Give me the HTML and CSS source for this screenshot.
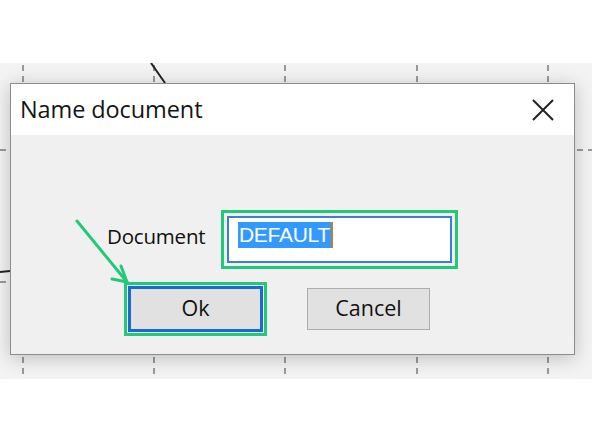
FILE: index.html
```html
<!DOCTYPE html>
<html>
<head>
<meta charset="utf-8">
<link rel="stylesheet" href="styles.css">
</head>
<body>
<div class="page">
  <div class="canvas">
    <svg class="grid" width="592" height="316" viewBox="0 0 592 316">
      <g stroke="#9a9a9a" stroke-width="2" stroke-dasharray="6 5">
        <line x1="23" y1="2" x2="23" y2="20"/>
        <line x1="154" y1="2" x2="154" y2="20"/>
        <line x1="285" y1="2" x2="285" y2="20"/>
        <line x1="417" y1="2" x2="417" y2="20"/>
        <line x1="548" y1="2" x2="548" y2="20"/>
        <line x1="23" y1="294" x2="23" y2="316"/>
        <line x1="154" y1="294" x2="154" y2="316"/>
        <line x1="285" y1="294" x2="285" y2="316"/>
        <line x1="417" y1="294" x2="417" y2="316"/>
        <line x1="548" y1="294" x2="548" y2="316"/>
        <line x1="0" y1="87" x2="10" y2="87"/>
        <line x1="577" y1="87" x2="592" y2="87"/>
        <line x1="0" y1="219" x2="10" y2="219"/>
      </g>
      <line x1="151" y1="0" x2="165" y2="20" stroke="#222" stroke-width="2"/>
      <line x1="0" y1="209" x2="10" y2="208" stroke="#222" stroke-width="2"/>
    </svg>
    <div class="dialog">
      <div class="titlebar">
        <span class="title">Name document</span>
        <svg class="close" width="22" height="22" viewBox="0 0 22 22">
          <path d="M1 1 L21 21 M21 1 L1 21" stroke="#222" stroke-width="2" fill="none"/>
        </svg>
      </div>
      <div class="content">
        <div class="row">
          <span class="label">Document</span>
          <div class="input"><span class="sel">DEFAULT</span><span class="caret"></span></div>
        </div>
        <div class="row buttons">
          <button class="btn ok">Ok</button>
          <button class="btn cancel">Cancel</button>
        </div>
      </div>
    </div>
  </div>
  <svg class="arrow" width="592" height="444" viewBox="0 0 592 444">
    <g stroke="#22c978" stroke-width="3" fill="none" stroke-linecap="round">
      <path d="M77 221 L127 282"/>
      <path d="M121 266 L127 282 L112 279"/>
    </g>
  </svg>
</div>
</body>
</html>
```
FILE: styles.css
```css
* { box-sizing: border-box; }
html, body { margin: 0; padding: 0; background: #fff; }
.page {
  position: relative;
  width: 592px;
  height: 444px;
  padding-top: 63px;
  font-family: "Open Sans", "Noto Sans", sans-serif;
  color: #111;
}
.canvas {
  position: relative;
  height: 316px;
  background: #f3f3f3;
  padding: 20px 0 0 10px;
}
.grid { position: absolute; left: 0; top: 0; }
.dialog {
  position: relative;
  width: 565px;
  height: 272px;
  border: 1px solid #8c8c8c;
  background: #f0f0f0;
  box-shadow: 0 3px 18px rgba(0,0,0,0.22);
  display: flex;
  flex-direction: column;
}
.titlebar {
  height: 51px;
  background: #fff;
  display: flex;
  align-items: center;
  justify-content: space-between;
  padding: 0 20px 0 9px;
}
.title { font-size: 23.5px; letter-spacing: -0.1px; color: #151515; margin-bottom: 2px; }
.close { display: block; }
.content {
  flex: 1;
  display: flex;
  flex-direction: column;
  padding: 81px 0 0 117px;
}
.row { display: flex; align-items: center; }
.label { font-size: 20.5px; width: 120px; margin-left: -21px; margin-bottom: 7px; letter-spacing: -0.2px; }
.input {
  width: 225px;
  height: 47px;
  border: 2px solid #3f7fd2;
  background: #fff;
  outline: 3px solid #22c978;
  outline-offset: 3px;
  display: flex;
  align-items: flex-start;
  padding: 4px 0 0 9px;
  font-family: "Liberation Sans", sans-serif;
  font-size: 21px;
}
.sel { background: #3399ff; color: #fff; line-height: 26px; padding: 0 1px; letter-spacing: -0.3px; }
.caret { width: 2px; height: 26px; background: #c08030; }
.buttons { margin-top: 23px; }
.btn {
  font-family: "Open Sans", "Noto Sans", sans-serif;
  font-size: 21.5px;
  color: #111;
  background: #e1e1e1;
  padding: 0 0 3px;
}
.ok {
  width: 135px;
  height: 46px;
  border: 3px solid #1a6bd0;
  outline: 3px solid #22c978;
  outline-offset: 1px;
}
.cancel {
  width: 123px;
  height: 42px;
  margin-left: 44px;
  border: 1px solid #adadad;
}
.arrow { position: absolute; left: 0; top: 0; pointer-events: none; }
```
